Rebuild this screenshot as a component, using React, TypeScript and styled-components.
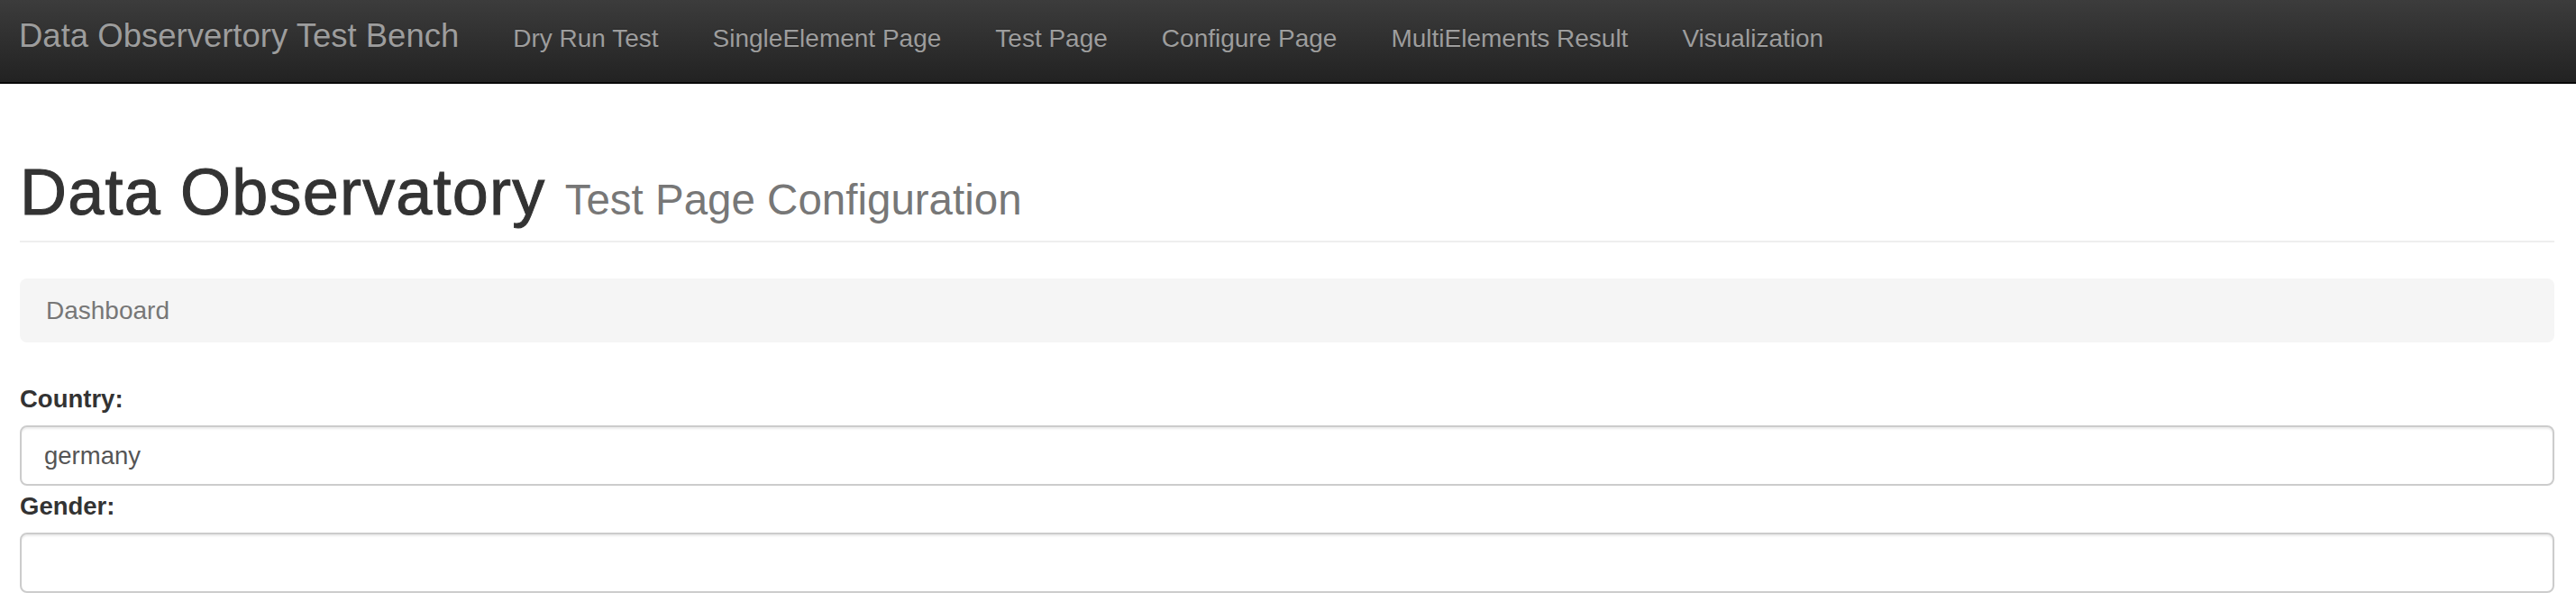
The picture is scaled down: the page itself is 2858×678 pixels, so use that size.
import styled, { createGlobalStyle } from 'styled-components';

const navItems = ['Dry Run Test', 'SingleElement Page', 'Test Page', 'Configure Page', 'MultiElements Result', 'Visualization'];

function App() {
    return (
        <div>
            <GlobalStyle />
            <Navbar>
                <Brand href="#">Data Observertory Test Bench</Brand>
                <NavList>
                    {navItems.map((item) => (
                        <li key={item}>
                            <NavLink href="#">{item}</NavLink>
                        </li>
                    ))}
                </NavList>
            </Navbar>

            <Content>
                <PageHeader>
                    <Title>
                        Data Observatory <Subtitle>Test Page Configuration</Subtitle>
                    </Title>
                </PageHeader>

                <Breadcrumb>
                    <li>Dashboard</li>
                </Breadcrumb>

                <form>
                    <FormLabel htmlFor="country">Country:</FormLabel>
                    <Input id="country" type="text" defaultValue="germany" />
                    <FormLabel htmlFor="gender">Gender:</FormLabel>
                    <Input id="gender" type="text" defaultValue="" />
                </form>
            </Content>
        </div>
    );
}

export default App;

const GlobalStyle = createGlobalStyle`
    * {
        box-sizing: border-box;
    }
    body {
        margin: 0;
        background: #fff;
        color: #333;
        font-family: 'Liberation Sans', Arial, Helvetica, sans-serif;
    }
`;

/* top bar - navbar-inverse look */
const Navbar = styled.nav`
    height: 93px;
    display: flex;
    align-items: baseline;
    padding: 22px 24px 0 21px;
    background-image: linear-gradient(to bottom, #3c3c3c 0%, #222 100%);
    border-bottom: 2px solid #080808;
`;
const Brand = styled.a`
    margin-right: 30px;
    font-size: 36.5px;
    line-height: 1;
    color: #9d9d9d;
    text-decoration: none;
    text-shadow: 0 -1px 0 rgba(0, 0, 0, 0.25);
`;
const NavList = styled.ul`
    display: flex;
    align-items: baseline;
    list-style: none;
    margin: 0;
    padding: 0;
`;
const NavLink = styled.a`
    display: block;
    padding: 0 30px;
    font-size: 28px;
    line-height: 1;
    color: #9d9d9d;
    text-decoration: none;
    text-shadow: 0 -1px 0 rgba(0, 0, 0, 0.25);
`;

const Content = styled.div`
    padding: 0 24px 0 22px;
`;
const PageHeader = styled.div`
    margin: 81px 0 40px;
    padding-bottom: 6px;
    border-bottom: 2px solid #eee;
`;
const Title = styled.h1`
    margin: 0;
    font-size: 72px;
    line-height: 79px;
    font-weight: normal;
    letter-spacing: 1.2px;
    color: #333;
    -webkit-text-stroke: 1px #333;
`;
const Subtitle = styled.small`
    font-size: 47.5px;
    letter-spacing: 0;
    color: #777;
    -webkit-text-stroke: 0;
`;
const Breadcrumb = styled.ol`
    list-style: none;
    margin: 0 0 44px;
    padding: 16px 28px 15px 29px;
    background: #f5f5f5;
    border-radius: 8px;
    font-size: 28px;
    line-height: 40px;
    color: #777;
`;
const FormLabel = styled.label`
    display: block;
    margin-bottom: 10px;
    font-size: 27.5px;
    line-height: 38px;
    font-weight: bold;
    color: #333;
`;
const Input = styled.input`
    display: block;
    width: 100%;
    height: 67px;
    margin: 0 0 4px;
    padding: 0 25px;
    font-family: inherit;
    font-size: 27.5px;
    color: #555;
    background: #fff;
    border: 2px solid #ccc;
    border-radius: 8px;
    box-shadow: inset 0 2px 2px rgba(0, 0, 0, 0.075);
    outline: none;
`;
